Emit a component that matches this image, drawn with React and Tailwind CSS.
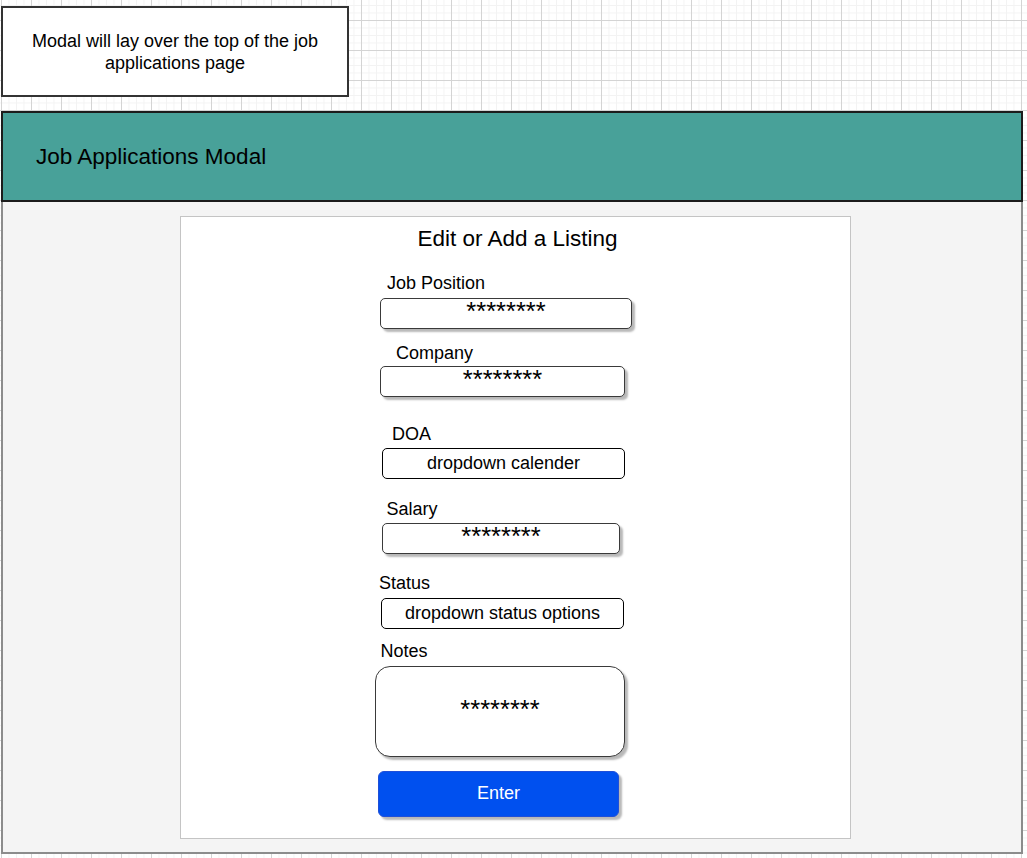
import React from "react";

const gridBg =
  "[background-image:linear-gradient(to_right,#d4d4d4_1px,transparent_1px),linear-gradient(to_bottom,#d4d4d4_1px,transparent_1px),linear-gradient(to_right,#f3f3f3_1px,transparent_1px),linear-gradient(to_bottom,#f3f3f3_1px,transparent_1px)] [background-size:30px_30px,30px_30px,7.5px_7.5px,7.5px_7.5px] [background-position:1px_20px,1px_20px,1px_20px,1px_20px]";

function Label({ children, className }) {
  return (
    <div className={"text-[18px] leading-[20px] text-black " + className}>
      {children}
    </div>
  );
}

function Masked({ className }) {
  return (
    <div
      className={
        "rounded-[5px] border border-[#3a3a3a] bg-white text-center text-[25.5px] leading-[24px] shadow-[3px_3px_2px_rgba(0,0,0,0.28)] " +
        className
      }
    >
      ********
    </div>
  );
}

function Dropdown({ children, className }) {
  return (
    <div
      className={
        "flex items-center justify-center rounded-[5px] border border-black bg-white text-[18px] " +
        className
      }
    >
      {children}
    </div>
  );
}

export default function App() {
  return (
    <div
      className={
        "w-[1027px] h-[858px] overflow-hidden bg-white pt-[6px] pl-[1px] font-['Liberation_Sans',Arial,sans-serif] text-black " +
        gridBg
      }
    >
      <div className="flex h-[91px] w-[348px] items-center justify-center border-2 border-[#333] bg-white text-center text-[18px] leading-[22px]">
        Modal will lay over the top of the job
        <br />
        applications page
      </div>

      <div className="mt-[14px] w-[1022px]">
        <div className="flex h-[91px] items-center border-2 border-[#1c1c1c] bg-[#48a199] pl-[33px] text-[22.5px]">
          Job Applications Modal
        </div>

        <div className="h-[652px] border-x-2 border-b-2 border-[#8c8c8c] bg-[#f4f4f4] pt-[14px] pl-[177px]">
          <div className="flex h-[623px] w-[671px] flex-col border border-[#c4c4c4] bg-white">
            <div className="mt-[9px] pl-[4px] text-center text-[22.5px] leading-[26px]">
              Edit or Add a Listing
            </div>

            <Label className="mt-[20.5px] ml-[206px]">Job Position</Label>
            <Masked className="mt-[5.5px] ml-[199px] h-[31px] w-[252px]" />

            <Label className="mt-[13.5px] ml-[215px]">Company</Label>
            <Masked className="mt-[3.5px] ml-[199px] h-[31px] w-[245px]" />

            <Label className="mt-[26.5px] ml-[211px]">DOA</Label>
            <Dropdown className="mt-[4.5px] ml-[201px] h-[31px] w-[243px]">
              dropdown calender
            </Dropdown>

            <Label className="mt-[20px] ml-[205.5px]">Salary</Label>
            <Masked className="mt-[4px] ml-[201px] h-[31px] w-[238px]" />

            <Label className="mt-[19px] ml-[198px]">Status</Label>
            <Dropdown className="mt-[5px] ml-[200px] h-[31px] w-[243px]">
              dropdown status options
            </Dropdown>

            <Label className="mt-[11.5px] ml-[199.5px]">Notes</Label>
            <div className="mt-[5.5px] ml-[194px] flex h-[91px] w-[250px] items-center justify-center rounded-[15px] border border-[#3a3a3a] bg-white pb-[6px] text-[25.5px] leading-[24px] shadow-[3px_3px_2px_rgba(0,0,0,0.28)]">
              ********
            </div>

            <button className="mt-[14px] ml-[197px] h-[46px] w-[241px] rounded-[6px] border border-[#1f4fd8] bg-[#0050ef] pb-[2px] text-[18px] text-white shadow-[3px_3px_2px_rgba(0,0,0,0.28)]">
              Enter
            </button>
          </div>
        </div>
      </div>
    </div>
  );
}
